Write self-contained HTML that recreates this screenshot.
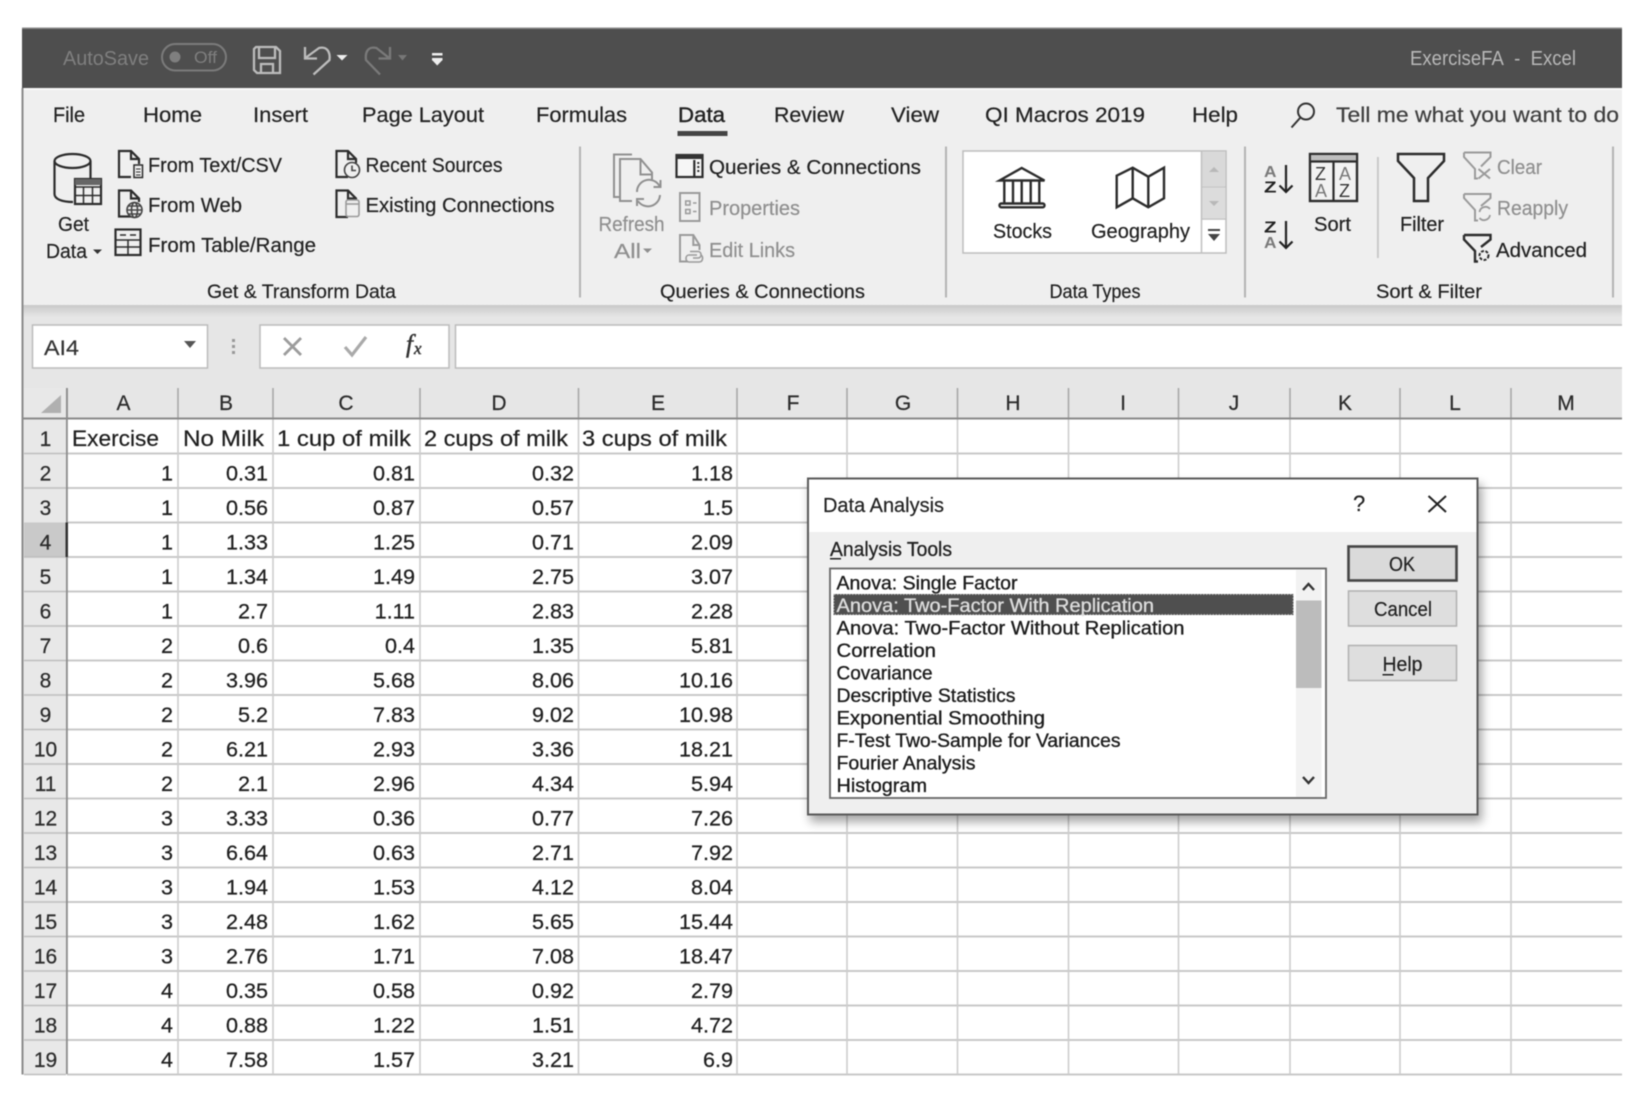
<!DOCTYPE html>
<html><head><meta charset="utf-8"><title>ExerciseFA - Excel</title>
<style>
html,body{margin:0;padding:0;background:#fff;width:1644px;height:1096px;overflow:hidden}
svg{display:block;filter:blur(.55px)}
text{font-family:"Liberation Sans",sans-serif;fill:#222;font-size:20px;stroke:#222;stroke-width:.2}
.t{font-size:21.5px}
.r{font-size:20px}
.g{fill:#8f8f8f;stroke:#8f8f8f}
.l{font-size:19.5px;fill:#222}
.c{font-size:21.6px;fill:#1e1e1e;text-anchor:end;stroke-width:.25}
.h{font-size:21px;text-anchor:middle;fill:#2c2c2c}
.n{font-size:21px;text-anchor:middle;fill:#2c2c2c}
.d{font-size:19.5px;fill:#1c1c1c;stroke:#1c1c1c;stroke-width:.35}
.i{fill:none;stroke:#2c2c2c;stroke-width:2.2}
.y{fill:none;stroke:#9a9a9a;stroke-width:2}
.q{stroke:none}
</style></head><body>
<svg width="1644" height="1096" viewBox="0 0 1644 1096" xmlns="http://www.w3.org/2000/svg">
<rect width="1644" height="1096" fill="#fff"/>
<!-- title bar -->
<rect x="22" y="28" width="1600" height="60" fill="#4e4e4e"/>
<rect x="22" y="27.500" width="1600" height="1.500" fill="#8a8a8a"/>
<text x="63" y="65" textLength="86" lengthAdjust="spacingAndGlyphs" style="fill:#7f7f7f;stroke:none">AutoSave</text>
<rect x="162" y="44" width="64" height="26.500" rx="13.200" fill="none" stroke="#7b7b7b" stroke-width="2"/>
<circle cx="175" cy="57" r="5.500" fill="#7f7f7f"/>
<text x="194" y="63" textLength="23" lengthAdjust="spacingAndGlyphs" style="fill:#7f7f7f;stroke:none;font-size:17px">Off</text>
<g fill="none" stroke="#bcbcbc" stroke-width="2.300">
<path d="M256 47H276L280 51V73H257L254 70V49Z"/><path d="M259 47V58H275V47"/><path d="M261 73V64H273V73"/>
<path d="M305 47V58.500H317"/><path d="M306 57.500L319 48C327 46 330.500 52 329.500 60L313.500 74.500"/>
</g>
<path d="M336.500 55H347.500L342 60.500Z" fill="#eee"/>
<g fill="none" stroke="#7a7a7a" stroke-width="2.300"><path d="M390 47V58.500H378.500"/><path d="M388.500 57.500L376.500 48C368 46 365 52 366 60L380 74.500"/></g>
<path d="M398 55H407L402.500 60.500Z" fill="#777"/>
<path d="M432 53H442.500V55.500H432ZM432 58H442.500V60.500H432ZM432.500 60.500H442L437.200 65.500Z" fill="#eee"/>
<text x="1410" y="65" textLength="166" lengthAdjust="spacingAndGlyphs" style="fill:#b8b8b8;stroke:none">ExerciseFA&#160;&#160;-&#160;&#160;Excel</text>

<!-- ribbon -->
<rect x="22" y="88" width="1600" height="217" fill="#efefef"/>
<rect x="22" y="88" width="1600" height="2" fill="#f8f8f8"/>
<text class="t" x="53" y="122" textLength="32" lengthAdjust="spacingAndGlyphs">File</text>
<text class="t" x="143" y="122" textLength="59" lengthAdjust="spacingAndGlyphs">Home</text>
<text class="t" x="253" y="122" textLength="55" lengthAdjust="spacingAndGlyphs">Insert</text>
<text class="t" x="362" y="122" textLength="122" lengthAdjust="spacingAndGlyphs">Page Layout</text>
<text class="t" x="536" y="122" textLength="91" lengthAdjust="spacingAndGlyphs">Formulas</text>
<text class="t" x="678" y="122" textLength="47" lengthAdjust="spacingAndGlyphs" style="stroke-width:.4">Data</text>
<rect x="677.500" y="131" width="50" height="5" fill="#444"/>
<text class="t" x="774" y="122" textLength="70" lengthAdjust="spacingAndGlyphs">Review</text>
<text class="t" x="891" y="122" textLength="48" lengthAdjust="spacingAndGlyphs">View</text>
<text class="t" x="985" y="122" textLength="160" lengthAdjust="spacingAndGlyphs">QI Macros 2019</text>
<text class="t" x="1192" y="122" textLength="46" lengthAdjust="spacingAndGlyphs">Help</text>
<g fill="none" stroke="#333" stroke-width="2"><circle cx="1306" cy="111.500" r="8"/><path d="M1300 118L1291.500 127.500"/></g>
<text class="t" x="1336" y="122" textLength="283" lengthAdjust="spacingAndGlyphs" style="fill:#3e3e3e;stroke:#3e3e3e">Tell me what you want to do</text>

<!-- Get Data icon -->
<g class="i">
<ellipse cx="72.500" cy="161" rx="18" ry="7"/>
<path d="M54.500 161V194C54.500 199 62 202 73 202"/><path d="M90.500 161V178"/>
<rect x="75" y="179" width="26" height="25" fill="#efefef"/>
<path d="M75 187H101M75 195.500H101M83.500 187V204M92.500 187V204" stroke-width="1.500"/>
<rect x="75" y="179" width="26" height="6" fill="#666" stroke="none"/>
</g>
<text class="r" x="58" y="231" textLength="31" lengthAdjust="spacingAndGlyphs">Get</text>
<text class="r" x="46" y="258" textLength="41" lengthAdjust="spacingAndGlyphs">Data</text>
<path d="M93 249.500H102L97.500 254Z" fill="#333"/>

<!-- From icons -->
<g class="i">
<path d="M131 177H119V151H131L139 159V164M131 151V159H139"/>
<rect x="134" y="165" width="8.500" height="12.500" stroke-width="1.500"/><path d="M136 169H140.500M136 172H140.500M136 175H140.500" stroke-width="1"/>
<path d="M131 216.500H119V190.500H131L139 198.500V202M131 190.500V198.500H139"/>
<rect x="115.500" y="229.500" width="25" height="25.500"/>
<path d="M116 240H140M116 247H140M128 240V255" stroke-width="1.500"/>
<path d="M120 235H126M130 235H136" stroke-width="1.500"/>
<path d="M348 177H336.500V151H348L356 159V163M348 151V159H356"/>
<path d="M348 217H336.500V190.500H348L356 198.500V200M348 190.500V198.500H356"/>
</g>
<g fill="none" stroke="#444" stroke-width="1.600">
<circle cx="134.500" cy="210" r="7.500"/><ellipse cx="134.500" cy="210" rx="3" ry="7.500"/><path d="M127 210H142M128 206H141M128 214H141"/>
<circle cx="352" cy="170" r="7.500"/><path d="M352 165.500V170.500H356"/>
</g>
<g fill="none" stroke="#9a9a9a" stroke-width="1.600"><rect x="346" y="200" width="13" height="16.500" rx="2"/><path d="M346 204H359"/></g>
<text class="r" x="148" y="172" textLength="134" lengthAdjust="spacingAndGlyphs">From Text/CSV</text>
<text class="r" x="148" y="212" textLength="94" lengthAdjust="spacingAndGlyphs">From Web</text>
<text class="r" x="148" y="252" textLength="168" lengthAdjust="spacingAndGlyphs">From Table/Range</text>
<text class="r" x="365.500" y="172" textLength="137" lengthAdjust="spacingAndGlyphs">Recent Sources</text>
<text class="r" x="365.500" y="212" textLength="189" lengthAdjust="spacingAndGlyphs">Existing Connections</text>
<text class="l" x="207" y="298" textLength="189" lengthAdjust="spacingAndGlyphs">Get &amp; Transform Data</text>

<g fill="#b4b4b4"><rect x="579" y="146.500" width="2" height="151"/><rect x="945" y="146.500" width="2" height="151"/><rect x="1244" y="146.500" width="2" height="151"/><rect x="1612" y="146.500" width="2" height="151"/><rect x="1377" y="157" width="1.800" height="101" fill="#c6c6c6"/></g>

<!-- Refresh -->
<g class="y" style="stroke:#909090">
<path d="M632 154.500H614V197H620"/>
<path d="M632 201H620V159H640.500L652 172.500V180M640.500 159V174.500H652"/>
<path d="M637 192A12 12 0 0 1 659.500 186M660 195A12 12 0 0 1 638 201" stroke-width="2"/>
<path d="M660.500 180V187H653.500M637 206V199H644" stroke-width="2"/>
</g>
<text class="r g" x="598.500" y="231" textLength="66" lengthAdjust="spacingAndGlyphs">Refresh</text>
<text class="r g" x="614" y="258" textLength="27" lengthAdjust="spacingAndGlyphs">All</text>
<path d="M643 248.500H652L647.500 253Z" fill="#8f8f8f"/>

<!-- Queries -->
<g class="i"><rect x="676.500" y="155" width="26" height="22" fill="#f6f6f6"/><path d="M694.300 160V177"/><path d="M698.300 162V174" stroke-dasharray="2 2" stroke-width="2"/></g>
<rect x="676" y="154" width="27" height="5" fill="#333"/>
<text class="r" x="709" y="174" textLength="212" lengthAdjust="spacingAndGlyphs">Queries &amp; Connections</text>
<g class="y"><rect x="680" y="193" width="19.500" height="28"/><path d="M685.700 201H690V205H685.700ZM685.700 209.500H690V213.500H685.700ZM693 203H696.500M693 211.500H696.500" stroke-width="1.500"/></g>
<text class="r g" x="709" y="215" textLength="91" lengthAdjust="spacingAndGlyphs">Properties</text>
<g class="y"><path d="M688 261.500H680V235H693.300L699.500 245V250M693.300 235V245H699.500"/><path d="M690 251.500H698C702 251.500 702 258 698 258H693M697 255H689C685 255 685 262 689 262H699C703 262 703.500 257 701 255" stroke-width="1.600"/></g>
<text class="r g" x="709" y="257" textLength="86" lengthAdjust="spacingAndGlyphs">Edit Links</text>
<text class="l" x="660" y="298" textLength="205" lengthAdjust="spacingAndGlyphs">Queries &amp; Connections</text>

<!-- Data types -->
<rect x="963" y="151" width="263" height="102" fill="#fff" stroke="#bdbdbd" stroke-width="1.500"/>
<rect x="1202" y="151.500" width="23.500" height="34.500" fill="#d9d9d9"/>
<rect x="1202" y="188" width="23.500" height="30" fill="#dcdcdc"/>
<path d="M1201.500 151V253M1202 187H1226M1202 219H1226" stroke="#c0c0c0" stroke-width="1.500" fill="none"/>
<path d="M1209 172L1214 167L1219 172Z" fill="#b8b8b8"/><path d="M1209 201L1214 206L1219 201Z" fill="#b8b8b8"/>
<path d="M1208 229H1220V231H1208ZM1208 234H1220L1214 241Z" fill="#444"/>
<g class="i" style="stroke-width:2.400">
<path d="M999.500 180.500L1021.700 168L1044.500 180.500Z"/>
<path d="M1004.300 181V203M1013 181V203M1021.700 181V203M1030.700 181V203M1039.300 181V203"/>
<rect x="999.500" y="203.500" width="45" height="3.800" rx="1.800"/>
<path d="M1116.700 175.700L1132.700 167.700L1148.300 176.700L1164 167.700V198.300L1148.300 207.300L1132.700 198.300L1116.700 207.300Z"/>
<path d="M1132.700 168V198M1148.300 177V207"/>
</g>
<text class="r" x="993" y="238" textLength="59" lengthAdjust="spacingAndGlyphs">Stocks</text>
<text class="r" x="1091" y="238" textLength="99" lengthAdjust="spacingAndGlyphs">Geography</text>
<text class="l" x="1049.500" y="298" textLength="91" lengthAdjust="spacingAndGlyphs">Data Types</text>

<!-- Sort -->
<text class="q" x="1264" y="177" textLength="12.500" lengthAdjust="spacingAndGlyphs" style="font-size:15.500px;font-weight:bold;fill:#7a7a7a">A</text>
<text class="q" x="1264" y="192.500" textLength="12.500" lengthAdjust="spacingAndGlyphs" style="font-size:15.500px;font-weight:bold;fill:#222">Z</text>
<text class="q" x="1264" y="232.500" textLength="12.500" lengthAdjust="spacingAndGlyphs" style="font-size:15.500px;font-weight:bold;fill:#222">Z</text>
<text class="q" x="1264" y="248" textLength="12.500" lengthAdjust="spacingAndGlyphs" style="font-size:15.500px;font-weight:bold;fill:#7a7a7a">A</text>
<g fill="none" stroke="#222" stroke-width="2.200"><path d="M1286 165V192M1279.500 185.500L1286 192L1292.500 185.500M1286 221V248M1279.500 241.500L1286 248L1292.500 241.500"/></g>
<rect x="1310" y="154" width="47" height="47" fill="#f2f2f2" stroke="#2c2c2c" stroke-width="2.400"/>
<rect x="1311" y="155" width="45" height="6" fill="#bdbdbd"/><path d="M1310 161.500H1357M1333.500 161.500V201" stroke="#2c2c2c" stroke-width="2.200"/>
<text class="q" x="1315" y="180" style="font-size:18px;fill:#333">Z</text><text class="q" x="1315" y="197" style="font-size:18px;fill:#777">A</text>
<text class="q" x="1339" y="180" style="font-size:18px;fill:#777">A</text><text class="q" x="1339" y="197" style="font-size:18px;fill:#333">Z</text>
<text class="r" x="1314" y="231" textLength="37" lengthAdjust="spacingAndGlyphs">Sort</text>

<!-- Filter -->
<path class="i" d="M1398 154H1444V161L1428 178V201H1414V178L1398 161Z" style="stroke-width:2.500"/>
<text class="r" x="1400" y="231" textLength="44" lengthAdjust="spacingAndGlyphs">Filter</text>
<g class="y">
<path d="M1464 152.500H1490.500V157L1481 166.500M1464 152.500V157L1475 169V178.500H1478"/><path d="M1478.500 169L1490 178.500M1490 169L1478.500 178.500"/>
<path d="M1464 194H1490.500V198L1481 206M1464 194V198L1475 210V220.500H1478"/><path d="M1479.500 212A6 6 0 0 1 1490 209M1490 215A6 6 0 0 1 1479.500 218" stroke-width="1.800"/>
</g>
<text class="r g" x="1497" y="174" textLength="45" lengthAdjust="spacingAndGlyphs">Clear</text>
<text class="r g" x="1497" y="215" textLength="71" lengthAdjust="spacingAndGlyphs">Reapply</text>
<g class="i" style="stroke-width:2.400"><path d="M1464 235H1490.500V239.500L1481 247M1464 235V239.500L1475 251V261.500H1478"/><circle cx="1484" cy="255.500" r="4.500" stroke-width="2" stroke-dasharray="3 1.500"/></g>
<text class="r" x="1496" y="257" textLength="91" lengthAdjust="spacingAndGlyphs">Advanced</text>
<text class="l" x="1376" y="298" textLength="106" lengthAdjust="spacingAndGlyphs">Sort &amp; Filter</text>

<!-- formula region -->
<defs><linearGradient id="s" x1="0" y1="0" x2="0" y2="1"><stop offset="0" stop-color="#c9c9c9"/><stop offset="1" stop-color="#e6e6e6"/></linearGradient></defs>
<rect x="22" y="305" width="1600" height="114" fill="#e6e6e6"/>
<rect x="22" y="305" width="1600" height="12" fill="url(#s)"/>
<rect x="32.500" y="325" width="175" height="43" fill="#fff" stroke="#bbb" stroke-width="1.500"/>
<text x="44" y="355" textLength="35" lengthAdjust="spacingAndGlyphs" style="font-size:21px;fill:#333;stroke:#333">AI4</text>
<path d="M184 341H196L190 348Z" fill="#555"/>
<g fill="#999"><rect x="232" y="339" width="3" height="3"/><rect x="232" y="345" width="3" height="3"/><rect x="232" y="351" width="3" height="3"/></g>
<rect x="260" y="325" width="189" height="43" fill="#fff" stroke="#bbb" stroke-width="1.500"/>
<rect x="455.500" y="325" width="1180" height="43" fill="#fff" stroke="#bbb" stroke-width="1.500"/>
<rect x="1622" y="320" width="22" height="60" fill="#fff"/>
<path d="M284 338L301 355M301 338L284 355" fill="none" stroke="#9c9c9c" stroke-width="2.800"/>
<path d="M345 347L352 355L366 337" fill="none" stroke="#aaa" stroke-width="3.200"/>
<text x="406" y="352" style="font-family:'Liberation Serif',serif;font-style:italic;font-size:25px;fill:#333;stroke:#333;stroke-width:.5">f</text><text x="414" y="354" style="font-family:'Liberation Serif',serif;font-style:italic;font-size:17px;fill:#333;stroke:#333;stroke-width:.5">x</text>

<!-- sheet -->
<rect x="22" y="419" width="1600" height="655.500" fill="#fff"/>
<rect x="22" y="388" width="45" height="686.500" fill="#e8e8e8"/>
<rect x="24" y="522.500" width="42" height="34.500" fill="#c9c9c9"/>
<g stroke="#c8c8c8" stroke-width="2">
<path d="M67 453.500H1622M67 488H1622M67 522.500H1622M67 557H1622M67 591.500H1622M67 626H1622M67 660.500H1622M67 695H1622M67 729.500H1622M67 764H1622M67 798.500H1622M67 833H1622M67 867.500H1622M67 902H1622M67 936.500H1622M67 971H1622M67 1005.500H1622M67 1040H1622M67 1074.500H1622"/>
</g>
<g stroke="#cdcdcd" stroke-width="1.600">
<path d="M178 419V1074M273 419V1074M420 419V1074M578.500 419V1074M737 419V1074M847 419V1074M957.500 419V1074M1068.500 419V1074M1178.500 419V1074M1290 419V1074M1400 419V1074M1511 419V1074"/>
</g>
<g stroke="#a8a8a8" stroke-width="1.600"><path d="M67 388V418M178 388V418M273 388V418M420 388V418M578.500 388V418M737 388V418M847 388V418M957.500 388V418M1068.500 388V418M1178.500 388V418M1290 388V418M1400 388V418M1511 388V418"/></g>
<path d="M24 453.500H66M24 488H66M24 557H66M24 591.500H66M24 626H66M24 660.500H66M24 695H66M24 729.500H66M24 764H66M24 798.500H66M24 833H66M24 867.500H66M24 902H66M24 936.500H66M24 971H66M24 1005.500H66M24 1040H66M24 1074.500H66" stroke="#bdbdbd" stroke-width="1.500"/>
<rect x="22" y="417.500" width="1600" height="2" fill="#8a8a8a"/>
<rect x="66" y="388" width="1.800" height="686" fill="#8c8c8c"/>
<rect x="65.500" y="522.500" width="2.500" height="34.500" fill="#333"/>
<path d="M61 395V413H41Z" fill="#b0b0b0"/>
<rect x="21.500" y="88" width="2" height="986.500" fill="#8a8a8a"/>

<text class="h" x="123.500" y="410">A</text><text class="h" x="226" y="410">B</text><text class="h" x="346" y="410">C</text><text class="h" x="499" y="410">D</text><text class="h" x="658" y="410">E</text><text class="h" x="793" y="410">F</text><text class="h" x="903" y="410">G</text><text class="h" x="1013" y="410">H</text><text class="h" x="1123" y="410">I</text><text class="h" x="1234" y="410">J</text><text class="h" x="1345" y="410">K</text><text class="h" x="1455" y="410">L</text><text class="h" x="1566" y="410">M</text>

<g transform="translate(0,-.8)">
<text class="n" x="45.500" y="447">1</text><text class="n" x="45.500" y="481.500">2</text><text class="n" x="45.500" y="516">3</text><text class="n" x="45.500" y="550.500">4</text><text class="n" x="45.500" y="585">5</text><text class="n" x="45.500" y="619.500">6</text><text class="n" x="45.500" y="654">7</text><text class="n" x="45.500" y="688.500">8</text><text class="n" x="45.500" y="723">9</text><text class="n" x="45.500" y="757.500">10</text><text class="n" x="45.500" y="792">11</text><text class="n" x="45.500" y="826.500">12</text><text class="n" x="45.500" y="861">13</text><text class="n" x="45.500" y="895.500">14</text><text class="n" x="45.500" y="930">15</text><text class="n" x="45.500" y="964.500">16</text><text class="n" x="45.500" y="999">17</text><text class="n" x="45.500" y="1033.500">18</text><text class="n" x="45.500" y="1068">19</text>

<text x="72" y="447" textLength="87" lengthAdjust="spacingAndGlyphs" style="font-size:22px;fill:#1e1e1e">Exercise</text>
<text x="183" y="447" textLength="81" lengthAdjust="spacingAndGlyphs" style="font-size:22px;fill:#1e1e1e">No Milk</text>
<text x="277" y="447" textLength="134" lengthAdjust="spacingAndGlyphs" style="font-size:22px;fill:#1e1e1e">1 cup of milk</text>
<text x="424" y="447" textLength="144" lengthAdjust="spacingAndGlyphs" style="font-size:22px;fill:#1e1e1e">2 cups of milk</text>
<text x="582" y="447" textLength="145" lengthAdjust="spacingAndGlyphs" style="font-size:22px;fill:#1e1e1e">3 cups of milk</text>

<text class="c" y="481.500"><tspan x="173">1</tspan><tspan x="268">0.31</tspan><tspan x="415">0.81</tspan><tspan x="574">0.32</tspan><tspan x="733">1.18</tspan></text>
<text class="c" y="516"><tspan x="173">1</tspan><tspan x="268">0.56</tspan><tspan x="415">0.87</tspan><tspan x="574">0.57</tspan><tspan x="733">1.5</tspan></text>
<text class="c" y="550.500"><tspan x="173">1</tspan><tspan x="268">1.33</tspan><tspan x="415">1.25</tspan><tspan x="574">0.71</tspan><tspan x="733">2.09</tspan></text>
<text class="c" y="585"><tspan x="173">1</tspan><tspan x="268">1.34</tspan><tspan x="415">1.49</tspan><tspan x="574">2.75</tspan><tspan x="733">3.07</tspan></text>
<text class="c" y="619.500"><tspan x="173">1</tspan><tspan x="268">2.7</tspan><tspan x="415">1.11</tspan><tspan x="574">2.83</tspan><tspan x="733">2.28</tspan></text>
<text class="c" y="654"><tspan x="173">2</tspan><tspan x="268">0.6</tspan><tspan x="415">0.4</tspan><tspan x="574">1.35</tspan><tspan x="733">5.81</tspan></text>
<text class="c" y="688.500"><tspan x="173">2</tspan><tspan x="268">3.96</tspan><tspan x="415">5.68</tspan><tspan x="574">8.06</tspan><tspan x="733">10.16</tspan></text>
<text class="c" y="723"><tspan x="173">2</tspan><tspan x="268">5.2</tspan><tspan x="415">7.83</tspan><tspan x="574">9.02</tspan><tspan x="733">10.98</tspan></text>
<text class="c" y="757.500"><tspan x="173">2</tspan><tspan x="268">6.21</tspan><tspan x="415">2.93</tspan><tspan x="574">3.36</tspan><tspan x="733">18.21</tspan></text>
<text class="c" y="792"><tspan x="173">2</tspan><tspan x="268">2.1</tspan><tspan x="415">2.96</tspan><tspan x="574">4.34</tspan><tspan x="733">5.94</tspan></text>
<text class="c" y="826.500"><tspan x="173">3</tspan><tspan x="268">3.33</tspan><tspan x="415">0.36</tspan><tspan x="574">0.77</tspan><tspan x="733">7.26</tspan></text>
<text class="c" y="861"><tspan x="173">3</tspan><tspan x="268">6.64</tspan><tspan x="415">0.63</tspan><tspan x="574">2.71</tspan><tspan x="733">7.92</tspan></text>
<text class="c" y="895.500"><tspan x="173">3</tspan><tspan x="268">1.94</tspan><tspan x="415">1.53</tspan><tspan x="574">4.12</tspan><tspan x="733">8.04</tspan></text>
<text class="c" y="930"><tspan x="173">3</tspan><tspan x="268">2.48</tspan><tspan x="415">1.62</tspan><tspan x="574">5.65</tspan><tspan x="733">15.44</tspan></text>
<text class="c" y="964.500"><tspan x="173">3</tspan><tspan x="268">2.76</tspan><tspan x="415">1.71</tspan><tspan x="574">7.08</tspan><tspan x="733">18.47</tspan></text>
<text class="c" y="999"><tspan x="173">4</tspan><tspan x="268">0.35</tspan><tspan x="415">0.58</tspan><tspan x="574">0.92</tspan><tspan x="733">2.79</tspan></text>
<text class="c" y="1033.500"><tspan x="173">4</tspan><tspan x="268">0.88</tspan><tspan x="415">1.22</tspan><tspan x="574">1.51</tspan><tspan x="733">4.72</tspan></text>
<text class="c" y="1068"><tspan x="173">4</tspan><tspan x="268">7.58</tspan><tspan x="415">1.57</tspan><tspan x="574">3.21</tspan><tspan x="733">6.9</tspan></text>
</g>

<!-- dialog -->
<defs><filter id="ds" x="-5%" y="-5%" width="110%" height="112%"><feGaussianBlur stdDeviation="5"/></filter></defs>
<rect x="810" y="484" width="672" height="338" fill="#000" opacity=".35" filter="url(#ds)"/>
<rect x="808" y="478.500" width="669.500" height="336" fill="#efefef" stroke="#5a5a5a" stroke-width="2"/>
<rect x="809" y="479.500" width="667.500" height="52.500" fill="#fff"/>
<text x="823" y="512" textLength="121" lengthAdjust="spacingAndGlyphs">Data Analysis</text>
<text x="1353" y="511" style="font-size:22px">?</text>
<path d="M1428.500 496L1446 512M1446 496L1428.500 512" stroke="#222" stroke-width="2" fill="none"/>
<text x="830" y="556" textLength="122" lengthAdjust="spacingAndGlyphs" style="stroke-width:.3">Analysis Tools</text>
<rect x="830" y="558" width="11" height="1.500" fill="#222"/>
<rect x="830" y="568.500" width="496" height="229.500" fill="#fff" stroke="#666" stroke-width="1.800"/>
<rect x="833.500" y="594" width="460" height="21" fill="#4f4f4f"/>
<rect x="834" y="594.500" width="459" height="20" fill="none" stroke="#bbb" stroke-width=".8" stroke-dasharray="1.500 1.500"/>
<rect x="1296" y="570" width="25.500" height="227" fill="#f2f2f2"/>
<rect x="1296" y="600.500" width="25.500" height="87.500" fill="#bcbcbc"/>
<path d="M1303 590L1308.500 584L1314 590M1303 777L1308.500 783L1314 777" fill="none" stroke="#333" stroke-width="2.400"/>
<text class="d" x="836.500" y="589.500" textLength="181" lengthAdjust="spacingAndGlyphs">Anova: Single Factor</text>
<text class="d" x="836.500" y="612" textLength="317.500" lengthAdjust="spacingAndGlyphs" style="fill:#ddd;stroke:#ddd">Anova: Two-Factor With Replication</text>
<text class="d" x="836.500" y="634.500" textLength="348" lengthAdjust="spacingAndGlyphs">Anova: Two-Factor Without Replication</text>
<text class="d" x="836.500" y="657" textLength="99.500" lengthAdjust="spacingAndGlyphs">Correlation</text>
<text class="d" x="836.500" y="679.500" textLength="96" lengthAdjust="spacingAndGlyphs">Covariance</text>
<text class="d" x="836.500" y="702" textLength="179" lengthAdjust="spacingAndGlyphs">Descriptive Statistics</text>
<text class="d" x="836.500" y="724.500" textLength="208.500" lengthAdjust="spacingAndGlyphs">Exponential Smoothing</text>
<text class="d" x="836.500" y="747" textLength="284" lengthAdjust="spacingAndGlyphs">F-Test Two-Sample for Variances</text>
<text class="d" x="836.500" y="769.500" textLength="139" lengthAdjust="spacingAndGlyphs">Fourier Analysis</text>
<text class="d" x="836.500" y="792" textLength="90.500" lengthAdjust="spacingAndGlyphs">Histogram</text>
<rect x="1348.500" y="546.500" width="108" height="34" fill="#dadada" stroke="#444" stroke-width="2.600"/>
<rect x="1348.500" y="591" width="108" height="35" fill="#dedede" stroke="#b0b0b0" stroke-width="1.500"/>
<rect x="1348.500" y="645.500" width="108" height="35" fill="#dedede" stroke="#b0b0b0" stroke-width="1.500"/>
<text x="1389" y="571" textLength="26" lengthAdjust="spacingAndGlyphs">OK</text>
<text x="1374" y="616" textLength="58" lengthAdjust="spacingAndGlyphs">Cancel</text>
<text x="1382.500" y="671" textLength="40" lengthAdjust="spacingAndGlyphs">Help</text>
<rect x="1382.500" y="674" width="11" height="1.500" fill="#222"/>
</svg>
</body></html>
